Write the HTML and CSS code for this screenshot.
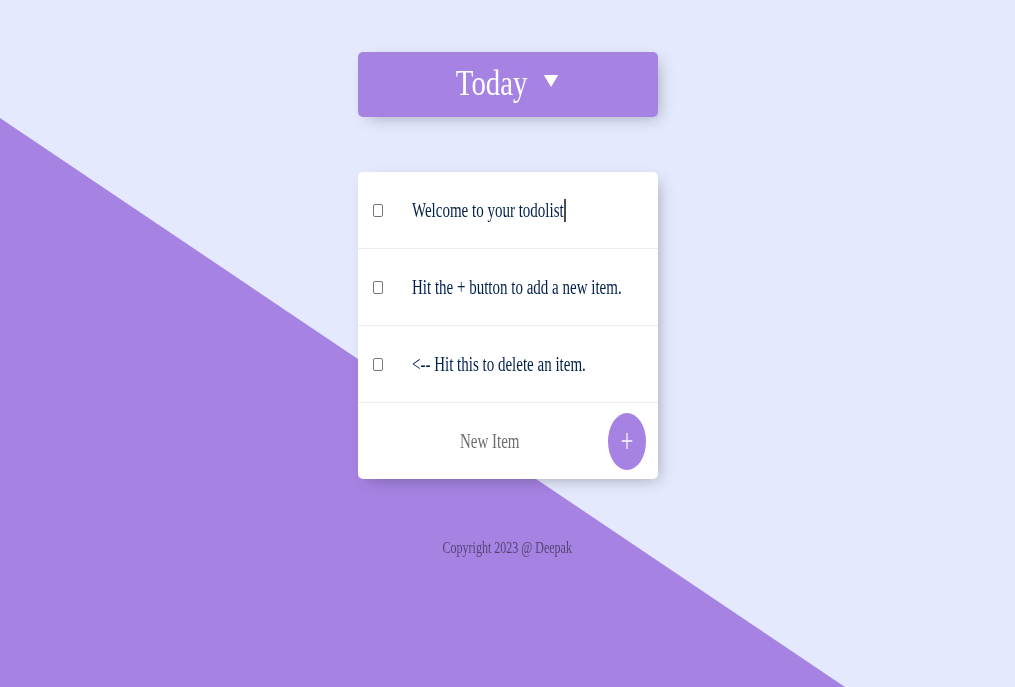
FILE: index.html
```html
<!DOCTYPE html>
<html lang="en">
<head>
<meta charset="utf-8">
<title>To Do List</title>
<link rel="stylesheet" href="styles.css">
</head>
<body>
<div class="backdrop"></div>
<main class="page">
  <div class="heading">
    <div class="heading-group">
      <h1 class="heading-title">Today</h1>
      <span class="heading-arrow"></span>
    </div>
  </div>

  <section class="card">
    <div class="item">
      <span class="check"></span>
      <p class="item-text"><span class="squeeze caret">Welcome to your todolist</span></p>
    </div>
    <div class="item">
      <span class="check"></span>
      <p class="item-text"><span class="squeeze">Hit the + button to add a new item.</span></p>
    </div>
    <div class="item">
      <span class="check"></span>
      <p class="item-text"><span class="squeeze">&lt;-- Hit this to delete an item.</span></p>
    </div>
    <form class="new-item">
      <div class="new-field"><span class="squeeze-center">New Item</span></div>
      <button class="add-btn" type="button" aria-label="Add">
        <svg width="16" height="18" viewBox="0 0 16 18"><path d="M8 1V17M1 9H15" stroke="#fff" stroke-width="1.6" fill="none"/></svg>
      </button>
    </form>
  </section>

  <footer class="footer"><span class="squeeze-center">Copyright 2023 @ Deepak</span></footer>
</main>
</body>
</html>
```

FILE: styles.css
```css
html {
  background: #E4E9FD;
}
body {
  margin: 0;
  min-height: 687px;
  font-family: "Liberation Serif", "Times New Roman", serif;
}
.backdrop {
  position: fixed;
  inset: 0;
  background: #A683E3;
  clip-path: polygon(0 118px, 845px 687px, 0 687px);
  z-index: 0;
}
.page {
  position: relative;
  z-index: 1;
  display: flex;
  flex-direction: column;
  align-items: center;
  padding-top: 52px;
}
.heading {
  width: 300px;
  height: 65px;
  box-sizing: border-box;
  padding-bottom: 4px;
  background: #A683E3;
  border-radius: 5px;
  box-shadow: 5px 5px 15px -5px rgba(0, 0, 0, 0.3);
  display: flex;
  align-items: center;
  justify-content: center;
}
.heading-group {
  display: flex;
  align-items: center;
  gap: 21px;
  transform: scaleX(0.8);
  transform-origin: center;
  margin-left: 0;
}
.heading-title {
  margin: 0;
  font-size: 36px;
  font-weight: normal;
  color: #fff;
  line-height: normal;
}
.heading-arrow {
  width: 0;
  height: 0;
  border-left: 9px solid transparent;
  border-right: 9px solid transparent;
  border-top: 12px solid #fff;
  margin-top: -4px;
}
.card {
  margin-top: 55px;
  width: 300px;
  background: #fff;
  border-radius: 5px;
  box-shadow: 5px 5px 15px -5px rgba(0, 0, 0, 0.3);
}
.item {
  height: 76px;
  display: flex;
  align-items: center;
  border-bottom: 1px solid #ececec;
  padding-left: 15px;
}
.check {
  width: 10px;
  height: 13px;
  box-sizing: border-box;
  border: 1px solid #767676;
  border-radius: 2px;
  flex: none;
}
.item-text {
  margin: 0 0 0 29px;
  font-size: 20px;
  color: #00204a;
  line-height: normal;
  white-space: nowrap;
}
.squeeze {
  display: inline-block;
  transform: scaleX(0.75);
  transform-origin: left center;
}
.squeeze-center {
  display: inline-block;
  transform: scaleX(0.75);
  transform-origin: center;
}
.caret::after {
  content: "";
  display: inline-block;
  width: 1.4px;
  height: 23px;
  background: #111;
  vertical-align: -5px;
  margin-left: 1px;
}
.new-item {
  height: 76px;
  display: flex;
  align-items: center;
  margin: 0;
}
.new-field {
  flex: 1;
  text-align: center;
  padding-left: 14px;
  font-size: 20px;
  color: #6e6e6e;
  white-space: nowrap;
}
.add-btn {
  width: 38px;
  height: 57px;
  margin-right: 12px;
  border: 0;
  border-radius: 50%;
  background: #A683E3;
  padding: 0;
  display: flex;
  align-items: center;
  justify-content: center;
}
.add-btn svg {
  display: block;
  transform: scaleX(0.75);
}
.footer {
  margin-top: 60px;
  font-size: 16px;
  color: rgba(0, 0, 0, 0.5);
  text-align: center;
}
```
